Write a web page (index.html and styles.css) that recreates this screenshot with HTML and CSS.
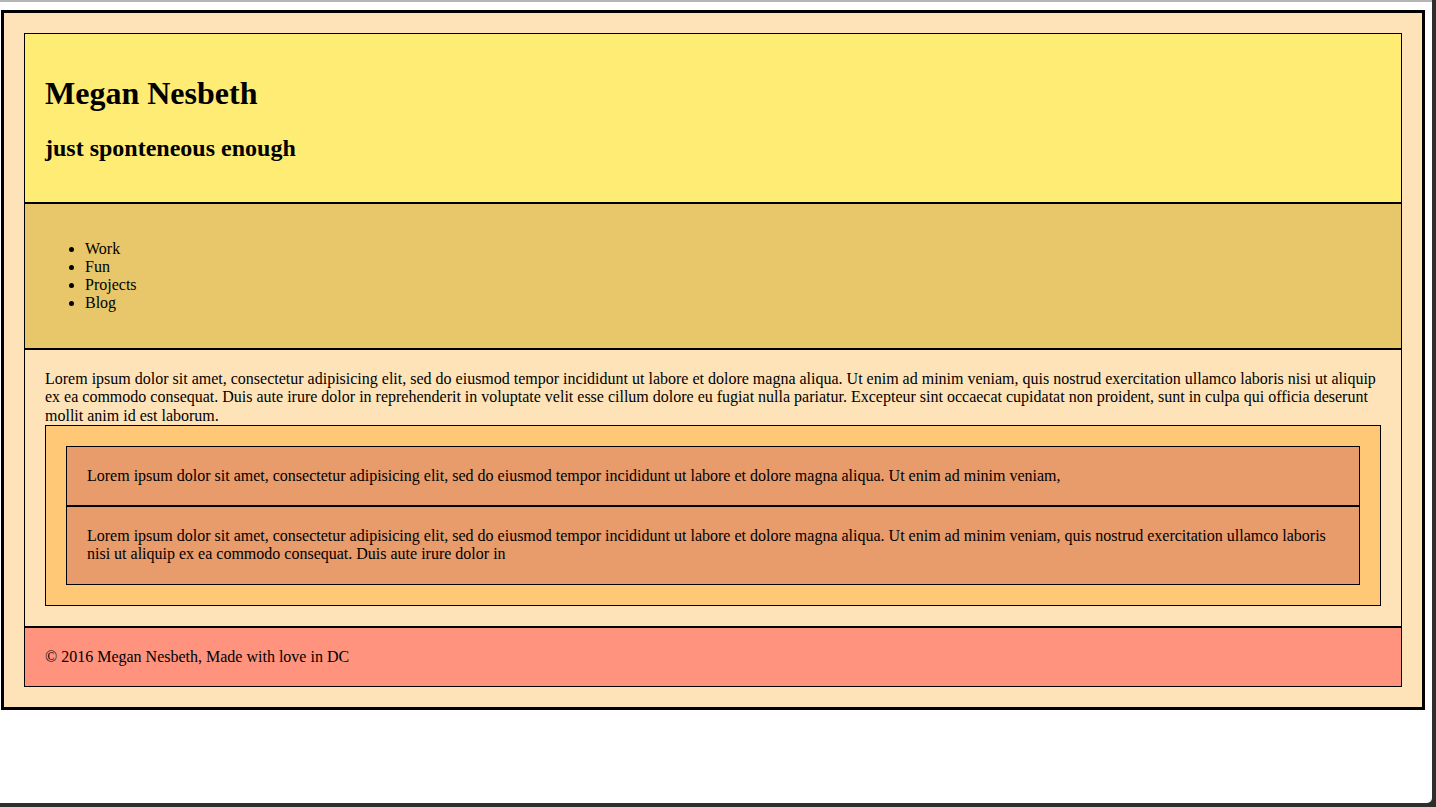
FILE: index.html
```html
<!DOCTYPE html>
<html lang="en">
<head>
<meta charset="utf-8">
<title>Megan Nesbeth</title>
<link rel="stylesheet" href="styles.css">
</head>
<body>
<div class="window">
  <div class="wrapper">
    <header class="header">
      <h1>Megan Nesbeth</h1>
      <h2>just sponteneous enough</h2>
    </header>
    <nav class="nav">
      <ul>
        <li>Work</li>
        <li>Fun</li>
        <li>Projects</li>
        <li>Blog</li>
      </ul>
    </nav>
    <main class="main">
      <div class="intro">Lorem ipsum dolor sit amet, consectetur adipisicing elit, sed do eiusmod tempor incididunt ut labore et dolore magna aliqua. Ut enim ad minim veniam, quis nostrud exercitation ullamco laboris nisi ut aliquip ex ea commodo consequat. Duis aute irure dolor in reprehenderit in voluptate velit esse cillum dolore eu fugiat nulla pariatur. Excepteur sint occaecat cupidatat non proident, sunt in culpa qui officia deserunt mollit anim id est laborum.</div>
      <section class="section">
        <div class="box">Lorem ipsum dolor sit amet, consectetur adipisicing elit, sed do eiusmod tempor incididunt ut labore et dolore magna aliqua. Ut enim ad minim veniam,</div>
        <div class="box">Lorem ipsum dolor sit amet, consectetur adipisicing elit, sed do eiusmod tempor incididunt ut labore et dolore magna aliqua. Ut enim ad minim veniam, quis nostrud exercitation ullamco laboris nisi ut aliquip ex ea commodo consequat. Duis aute irure dolor in</div>
      </section>
    </main>
    <footer class="footer">© 2016 Megan Nesbeth, Made with love in DC</footer>
  </div>
</div>
</body>
</html>
```

FILE: styles.css
```css
html {
  background: #2e2e2e;
}
body {
  margin: 0;
  font-family: "Liberation Serif", "Times New Roman", serif;
  font-size: 16px;
  color: #000;
}
.window {
  box-sizing: border-box;
  width: 1432px;
  height: 803px;
  background: #fff;
  border-top: 2px solid #b4b4b4;
  border-bottom-right-radius: 5px;
  padding-top: 8px;
  padding-left: 1px;
}
.wrapper {
  width: 1424px;
  border: 3px solid #000;
  background: #ffe3b8;
  padding: 20px;
  box-sizing: border-box;
}
.header,
.nav,
.main,
.footer {
  border: 1px solid #000;
  padding: 20px;
}
.header {
  background: #ffec74;
}
.header h1 {
  font-size: 32px;
  margin: 21px 0;
}
.header h2 {
  font-size: 24px;
  margin: 23px 0 20px;
}
.nav {
  background: #e7c76a;
}
.nav ul {
  margin: 16px 0;
  padding-left: 40px;
}
.main {
  background: #ffe3b8;
  line-height: 18.3px;
}
.section {
  border: 1px solid #000;
  background: #ffc876;
  padding: 20px;
}
.box {
  border: 1px solid #000;
  background: #e89b6b;
  padding: 20px;
}
.footer {
  background: #ff937e;
  line-height: 18.3px;
}
```
